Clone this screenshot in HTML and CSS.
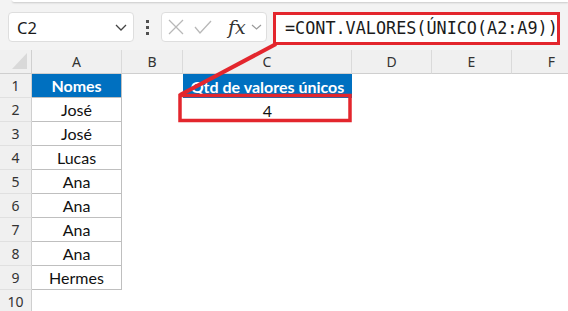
FILE: index.html
```html
<!DOCTYPE html>
<html>
<head>
  <title>Planilha</title>
  <link rel="stylesheet" href="styles.css">
</head>
<body>
  <div class="toolbar">
    <div class="ribbon-edge"></div>
    <div class="formula-row">
      <div class="name-box">
        <span>C2</span>
        <svg class="chevron" width="12" height="7" viewBox="0 0 12 7"><path d="M1 1 L6 6 L11 1" fill="none" stroke="#444" stroke-width="1.3"/></svg>
      </div>
      <div class="dots"><i></i><i></i><i></i></div>
      <div class="fx-box">
        <svg width="16" height="16" viewBox="0 0 16 16"><path d="M1 1 L15 15 M15 1 L1 15" stroke="#b8b8b8" stroke-width="1.3" fill="none"/></svg>
        <svg width="18" height="14" viewBox="0 0 18 14"><path d="M1 7 L6 13 L17 1" stroke="#b8b8b8" stroke-width="1.3" fill="none"/></svg>
        <span class="fx">fx</span>
        <svg width="11" height="6" viewBox="0 0 11 6"><path d="M1 1 L5.5 5 L10 1" fill="none" stroke="#9a9a9a" stroke-width="1.2"/></svg>
      </div>
      <div class="formula">=CONT.VALORES(ÚNICO(A2:A9))</div>
    </div>
  </div>

  <div class="sheet">
    <div class="corner"><span class="tri"></span></div>
    <div class="col-head">A</div>
    <div class="col-head">B</div>
    <div class="col-head">C</div>
    <div class="col-head">D</div>
    <div class="col-head">E</div>
    <div class="col-head">F</div>

    <div class="row-head">1</div>
    <div class="cell name head">Nomes</div>
    <div class="cell"></div>
    <div class="cell head">Qtd de valores únicos</div>
    <div class="cell"></div><div class="cell"></div><div class="cell"></div>

    <div class="row-head">2</div>
    <div class="cell name">José</div>
    <div class="cell"></div>
    <div class="cell value">4</div>
    <div class="cell"></div><div class="cell"></div><div class="cell"></div>

    <div class="row-head">3</div>
    <div class="cell name">José</div>
    <div class="cell"></div><div class="cell"></div><div class="cell"></div><div class="cell"></div><div class="cell"></div>

    <div class="row-head">4</div>
    <div class="cell name">Lucas</div>
    <div class="cell"></div><div class="cell"></div><div class="cell"></div><div class="cell"></div><div class="cell"></div>

    <div class="row-head">5</div>
    <div class="cell name">Ana</div>
    <div class="cell"></div><div class="cell"></div><div class="cell"></div><div class="cell"></div><div class="cell"></div>

    <div class="row-head">6</div>
    <div class="cell name">Ana</div>
    <div class="cell"></div><div class="cell"></div><div class="cell"></div><div class="cell"></div><div class="cell"></div>

    <div class="row-head">7</div>
    <div class="cell name">Ana</div>
    <div class="cell"></div><div class="cell"></div><div class="cell"></div><div class="cell"></div><div class="cell"></div>

    <div class="row-head">8</div>
    <div class="cell name">Ana</div>
    <div class="cell"></div><div class="cell"></div><div class="cell"></div><div class="cell"></div><div class="cell"></div>

    <div class="row-head">9</div>
    <div class="cell name">Hermes</div>
    <div class="cell"></div><div class="cell"></div><div class="cell"></div><div class="cell"></div><div class="cell"></div>

    <div class="row-head">10</div>
    <div class="cell"></div><div class="cell"></div><div class="cell"></div><div class="cell"></div><div class="cell"></div><div class="cell"></div>
  </div>

  <!-- red annotation: formula -> C2 -->
  <svg class="annotation" width="568" height="311" viewBox="0 0 568 311">
    <line x1="276" y1="44" x2="180" y2="95" stroke="#e3262d" stroke-width="4"/>
    <rect x="180" y="95.5" width="170" height="25" fill="none" stroke="#e3262d" stroke-width="3.5"/>
  </svg>
</body>
</html>
```

FILE: styles.css
```css
/* General */
body {
  margin: 0;
  width: 568px;
  height: 311px;
  overflow: hidden;
  background-color: #ffffff;
  font-family: "Noto Sans", Arial, sans-serif;
  color: #222222;
}

/* Toolbar / formula bar */
.toolbar {
  height: 50px;
  background-color: #f3f3f3;
}

.ribbon-edge {
  height: 2px;
  margin-left: 12px;
  background-color: #ffffff;
  border-bottom-left-radius: 6px;
  box-shadow: 0 1px 2px rgba(0, 0, 0, 0.18);
}

.formula-row {
  display: flex;
  align-items: flex-start;
  margin-top: 10px;
  padding-left: 8px;
}

.name-box {
  width: 126px;
  height: 30px;
  box-sizing: border-box;
  background-color: #ffffff;
  border: 1px solid #dedede;
  border-radius: 4px;
  display: flex;
  align-items: center;
  justify-content: space-between;
  padding: 0 6px 0 8px;
  font-size: 16.5px;
  color: #1a1a1a;
}

.dots {
  width: 27px;
  height: 30px;
  display: flex;
  flex-direction: column;
  align-items: center;
  justify-content: center;
  gap: 3px;
}

.dots i {
  display: block;
  width: 3px;
  height: 3px;
  background-color: #505050;
}

.fx-box {
  width: 106px;
  height: 30px;
  box-sizing: border-box;
  background-color: #ffffff;
  border: 1px solid #dedede;
  border-radius: 4px;
  display: flex;
  align-items: center;
  padding-left: 6px;
  gap: 10px;
}

.fx-box .fx {
  font-family: "DejaVu Serif", "Liberation Serif", serif;
  font-style: italic;
  font-size: 19px;
  color: #333333;
  margin-left: 6px;
  margin-right: -5px;
}

.formula {
  width: 287px;
  height: 33px;
  margin-left: 6px;
  box-sizing: border-box;
  background-color: #ffffff;
  border: 3.5px solid #e3262d;
  font-family: "DejaVu Sans Mono", "Liberation Mono", monospace;
  font-size: 16.8px;
  line-height: 26px;
  padding-left: 9px;
  color: #1a1a1a;
  white-space: nowrap;
}

/* Sheet grid */
.sheet {
  display: grid;
  grid-template-columns: 32px 90px 61px 169px 80px 80px 80px;
  grid-auto-rows: 24px;
  font-family: "Lato", "Noto Sans", sans-serif;
  font-size: 16px;
}

.corner,
.col-head,
.row-head {
  background-color: #f0f0f0;
  font-family: "Noto Sans", Arial, sans-serif;
  font-size: 14px;
  color: #333333;
  display: flex;
  align-items: center;
  justify-content: center;
  box-sizing: border-box;
}

.corner {
  border-right: 1px solid #d0d0d0;
  border-bottom: 1px solid #cfcfcf;
  position: relative;
}

.corner .tri {
  position: absolute;
  right: 4px;
  bottom: 4px;
  width: 0;
  height: 0;
  border-left: 15px solid transparent;
  border-bottom: 16px solid #d9d9d9;
}

.col-head {
  border-right: 1px solid #dadada;
  border-bottom: 1px solid #cfcfcf;
}

.row-head {
  border-right: 1px solid #cfcfcf;
  border-bottom: 1px solid #e0e0e0;
}

.cell {
  display: flex;
  align-items: center;
  justify-content: center;
  white-space: nowrap;
  box-sizing: border-box;
  color: #111111;
}

.cell.name {
  border-right: 1px solid #bfbfbf;
  border-bottom: 1px solid #bfbfbf;
}

.cell.head {
  background-color: #0070c0;
  color: #ffffff;
  font-weight: bold;
}

/* annotation overlay */
.annotation {
  position: absolute;
  top: 0;
  left: 0;
  pointer-events: none;
}
```
